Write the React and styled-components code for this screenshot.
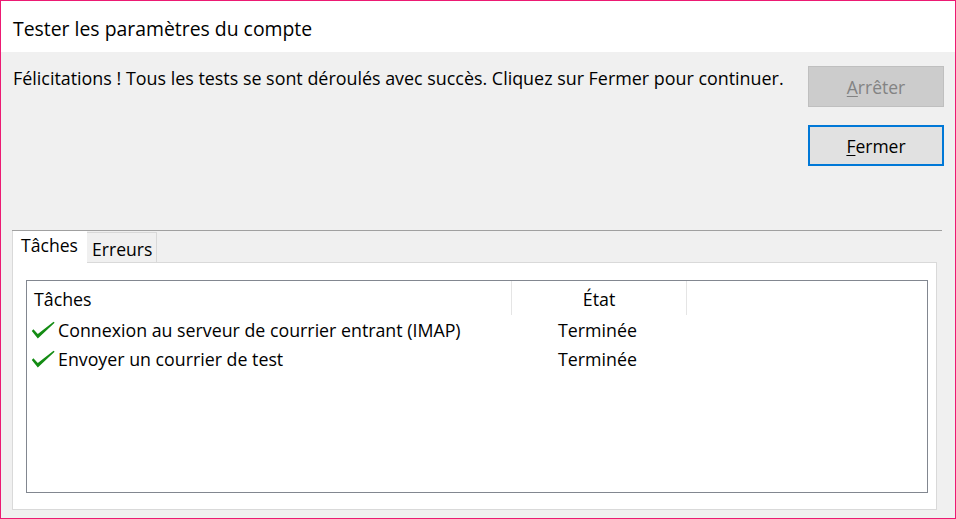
import React from 'react'
import styled, { createGlobalStyle } from 'styled-components'

const Global = createGlobalStyle`
  html, body { margin: 0; padding: 0; background: #fff; }
  * { box-sizing: border-box; }
`;

const Window = styled.div`
  width: 956px;
  height: 519px;
  border: 1px solid #ec1a73;
  display: flex;
  flex-direction: column;
  font-family: "Open Sans", "Noto Sans", sans-serif;
  color: #000;
`;

const TitleBar = styled.div`
  height: 51px;
  flex: none;
  background: #fff;
  display: flex;
  align-items: center;
  padding: 3px 0 0 12px;
  font-size: 19.4px;
`;

const Body = styled.div`
  flex: 1;
  background: #f0f0f0;
  display: flex;
  flex-direction: column;
  padding: 14px 11px 8px 11px;
  font-size: 17.8px;
`;

const TopRow = styled.div`
  display: flex;
  justify-content: space-between;
  align-items: flex-start;
`;

const Message = styled.div`
  font-size: 17.9px;
  line-height: 24px;
  margin: 0 0 0 1px;
`;

const ButtonColumn = styled.div`
  display: flex;
  flex-direction: column;
  gap: 18px;
`;

const Button = styled.button`
  width: 136px;
  height: 41px;
  font-family: inherit;
  font-size: 17.5px;
  padding: 0;
  background: ${p => (p.disabled ? '#cccccc' : '#e1e1e1')};
  color: ${p => (p.disabled ? '#838383' : '#000')};
  border: ${p => (p.$focused ? '2px solid #0078d7' : '1px solid #bfbfbf')};
  u { text-decoration: underline; text-underline-offset: 2px; }
`;

const Separator = styled.div`
  height: 1px;
  background: #a0a0a0;
  margin: 64px 2px 0 0;
`;

const TabStrip = styled.div`
  display: flex;
  align-items: flex-end;
  position: relative;
  z-index: 1;
  margin-bottom: -1px;
`;

const Tab = styled.div`
  height: ${p => (p.$active ? '32px' : '31px')};
  padding: ${p => (p.$active ? '2px 0 0 8px' : '4px 0 0 5px')};
  width: ${p => (p.$active ? '75px' : '70px')};
  background: ${p => (p.$active ? '#fff' : '#f0f0f0')};
  border: 1px solid #d9d9d9;
  border-top: ${p => (p.$active ? 'none' : '1px solid #d9d9d9')};
  border-bottom: ${p => (p.$active ? 'none' : '1px solid #d9d9d9')};
  border-left: ${p => (p.$active ? '1px solid #d9d9d9' : 'none')};
  border-right: ${p => (p.$active ? 'none' : '1px solid #d9d9d9')};
  font-size: 17.6px;
  line-height: 24px;
`;

const Panel = styled.div`
  flex: 1;
  width: 925px;
  background: #fff;
  border: 1px solid #d9d9d9;
  display: flex;
  padding: 17px 8px 16px 13px;
`;

const ListBox = styled.div`
  flex: 1;
  border: 1px solid #828790;
  display: grid;
  grid-template-columns: 485px 175px 1fr;
  grid-auto-rows: 29px;
  grid-template-rows: 34px;
  align-content: start;
`;

const HeadCell = styled.div`
  display: flex;
  align-items: center;
  justify-content: ${p => (p.$center ? 'center' : 'flex-start')};
  padding-left: ${p => (p.$center ? '0' : '7px')};
  padding-top: 2px;
  border-right: ${p => (p.$last ? 'none' : '1px solid #e5e5e5')};
`;

const Cell = styled.div`
  display: flex;
  align-items: center;
  gap: 3px;
  justify-content: ${p => (p.$center ? 'center' : 'flex-start')};
  padding-left: ${p => (p.$center ? '0' : '4px')};
  padding-right: ${p => (p.$center ? '4px' : '0')};
  padding-top: 1px;
`;

const Check = () => (
  <svg width="24" height="19" viewBox="0 0 24 19">
    <path d="M0.8 9.9 L2.4 8.2 L6.8 12.9 L22.6 0.8 L23.6 1.8 L6.8 17.6 Z" fill="#148c14" />
  </svg>
);

const tasks = [
  'Connexion au serveur de courrier entrant (IMAP)',
  'Envoyer un courrier de test',
];

export default function App() {
  return (
    <>
      <Global />
      <Window>
        <TitleBar>Tester les paramètres du compte</TitleBar>
        <Body>
          <TopRow>
            <Message>
              Félicitations ! Tous les tests se sont déroulés avec succès. Cliquez sur Fermer pour continuer.
            </Message>
            <ButtonColumn>
              <Button disabled><u>A</u>rrêter</Button>
              <Button $focused><u>F</u>ermer</Button>
            </ButtonColumn>
          </TopRow>
          <Separator />
          <TabStrip>
            <Tab $active>Tâches</Tab>
            <Tab>Erreurs</Tab>
          </TabStrip>
          <Panel>
            <ListBox>
              <HeadCell>Tâches</HeadCell>
              <HeadCell $center>État</HeadCell>
              <HeadCell $last />
              {tasks.map(t => (
                <React.Fragment key={t}>
                  <Cell><Check />{t}</Cell>
                  <Cell $center>Terminée</Cell>
                  <Cell />
                </React.Fragment>
              ))}
            </ListBox>
          </Panel>
        </Body>
      </Window>
    </>
  );
}
